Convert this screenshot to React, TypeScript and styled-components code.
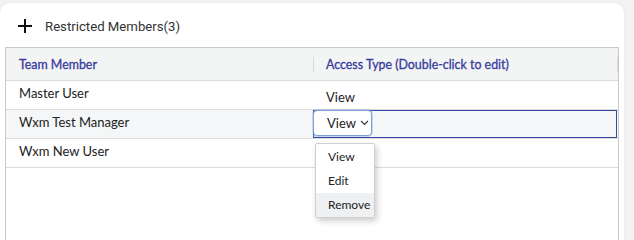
import React, { useState } from 'react';
import styled, { createGlobalStyle } from 'styled-components';

type Member = {
  name: string;
  access: string;
};

const members: Member[] = [
  { name: 'Master User', access: 'View' },
  { name: 'Wxm Test Manager', access: 'View' },
  { name: 'Wxm New User', access: 'View' },
];

const accessOptions = ['View', 'Edit', 'Remove'];

const App = () => {
  const [editing] = useState(1);
  const [hovered, setHovered] = useState('Remove');

  return (
    <>
      <GlobalStyle />
      <Card>
        <TitleBar>
          <PlusIcon width='14' height='14' viewBox='0 0 14 14'>
            <path d='M7 0v14M0 7h14' stroke='#111' strokeWidth='2' />
          </PlusIcon>
          <Title>Restricted Members(3)</Title>
        </TitleBar>
        <Table>
          <HeaderRow>
            <HeaderCell $width={307}>Team Member</HeaderCell>
            <Separator />
            <HeaderCell>Access Type (Double-click to edit)</HeaderCell>
            <Separator />
          </HeaderRow>
          {members.map((m, i) => (
            <Row key={m.name} $selected={i === editing}>
              <NameCell>{m.name}</NameCell>
              {i === editing ? (
                <EditorCell>
                  <SelectBox>
                    {m.access}
                    <Chevron width='9' height='6' viewBox='0 0 9 6'>
                      <path d='M1 1l3.5 3.5L8 1' fill='none' stroke='#333' strokeWidth='1.1' />
                    </Chevron>
                    <Menu>
                      {accessOptions.map(opt => (
                        <MenuItem
                          key={opt}
                          $active={hovered === opt}
                          onMouseEnter={() => setHovered(opt)}
                        >
                          {opt}
                        </MenuItem>
                      ))}
                    </Menu>
                  </SelectBox>
                </EditorCell>
              ) : (
                // the open menu covers this cell on the row below the editor
                <AccessCell $hidden={i === editing + 1}>{m.access}</AccessCell>
              )}
            </Row>
          ))}
        </Table>
      </Card>
    </>
  );
};

export default App;

const GlobalStyle = createGlobalStyle`
  body {
    margin: 0;
    background: #f3f3f3;
    font-family: Lato, 'Noto Sans', sans-serif;
    overflow: hidden;
  }
`;

const Card = styled.div`
  margin-top: 3px;
  width: 624px;
  height: 260px;
  background: #fff;
  border-radius: 10px;
  box-shadow: 0 0 3px rgba(0, 0, 0, 0.06);
  display: flex;
  flex-direction: column;
`;

const TitleBar = styled.div`
  display: flex;
  align-items: center;
  height: 26px;
  padding: 10px 0 0 18px;
  margin-bottom: 4px;
  gap: 13px;
`;

const PlusIcon = styled.svg`
  display: block;
`;

const Title = styled.span`
  font-family: Roboto, sans-serif;
  font-size: 13.2px;
  color: #333;
`;

const Table = styled.div`
  margin: 4px 5px 0 5px;
  flex: 1;
  border: 1px solid #c9c9c9;
  border-bottom: none;
  font-size: 13px;
  color: #222;
`;

const HeaderRow = styled.div`
  display: flex;
  align-items: center;
  height: 32px;
  background: #f3f4f4;
  border-bottom: 1px solid #dcdcdc;
`;

const HeaderCell = styled.div<{ $width?: number }>`
  ${p => (p.$width ? `width: ${p.$width - 13}px;` : 'flex: 1;')}
  padding-left: ${p => (p.$width ? 13 : 12)}px;
  font-size: 12.4px;
  color: #363b9c;
  -webkit-text-stroke: 0.3px #363b9c;
`;

const Separator = styled.div`
  width: 1px;
  height: 15px;
  background: #d9d9d9;
`;

const Row = styled.div<{ $selected?: boolean }>`
  display: flex;
  height: 28px;
  border-bottom: 1px solid #dcdcdc;
  background: ${p => (p.$selected ? '#f4f6f8' : '#fff')};
`;

const NameCell = styled.div`
  width: 294px;
  padding: 2px 0 0 13px;
  line-height: 20px;
`;

const AccessCell = styled.div<{ $hidden?: boolean }>`
  flex: 1;
  padding: 6px 0 0 13px;
  line-height: 20px;
  visibility: ${p => (p.$hidden ? 'hidden' : 'visible')};
`;

const EditorCell = styled.div`
  flex: 1;
  margin-right: 1px;
  border: 1px solid #3548a6;
  display: flex;
`;

const SelectBox = styled.div`
  position: relative;
  margin: -1px 0 0 -1px;
  width: 59px;
  height: 26px;
  background: #fff;
  border: 1px solid #7d9fdb;
  border-radius: 4px;
  box-shadow: 0 0 0 1px rgba(125, 159, 219, 0.35);
  display: flex;
  align-items: center;
  padding-left: 13px;
  box-sizing: border-box;
  gap: 4px;
`;

const Chevron = styled.svg`
  display: block;
`;

const Menu = styled.div`
  position: absolute;
  top: 32px;
  left: 1px;
  width: 58px;
  padding: 1px 0 0;
  background: #fff;
  border: 1px solid #cfcfcf;
  border-radius: 2px;
  box-shadow: 2px 3px 6px rgba(0, 0, 0, 0.2);
  z-index: 2;
`;

const MenuItem = styled.div<{ $active?: boolean }>`
  height: 24px;
  line-height: 24px;
  padding-left: 12px;
  font-size: 12px;
  white-space: nowrap;
  background: ${p => (p.$active ? '#eef0f2' : '#fff')};
  cursor: pointer;
`;
